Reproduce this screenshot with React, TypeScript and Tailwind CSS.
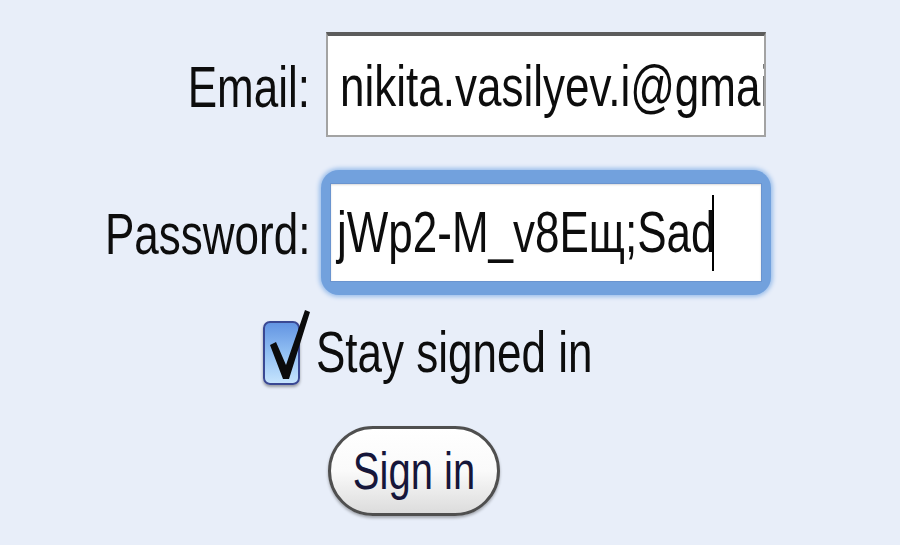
export default function App() {
  return (
    <div className="w-[900px] h-[545px] overflow-hidden bg-[#e8eef9] font-['Liberation_Sans',Arial,sans-serif] text-[44px] leading-none text-[#0d0d0d]">
      {/* Email */}
      <div className="flex items-center pl-[105px] pt-[32px]">
        <label className="w-[205px] text-right pt-[4px]">
          <span className="inline-block scale-y-[1.3]">Email:</span>
        </label>
        <div className="ml-4 w-[440px] h-[105px] flex items-center overflow-hidden whitespace-nowrap bg-white border-x-2 border-b-2 border-t-[4px] border-[#a3a3a3] border-t-[#5c5c5c] pl-[12px]">
          <span className="inline-block scale-y-[1.3]">nikita.vasilyev.i@gmail.com</span>
        </div>
      </div>

      {/* Password */}
      <div className="flex items-center pl-[105px] mt-[33px]">
        <label className="w-[205px] text-right pt-[4px]">
          <span className="inline-block scale-y-[1.3]">Password:</span>
        </label>
        <div className="ml-[11px] w-[450px] h-[125px] rounded-[18px] bg-[#72a1dd] px-[9px] py-[13px] shadow-[0_0_4px_2px_#9cbfeb]">
          <div className="h-full flex items-center overflow-hidden whitespace-nowrap bg-white border border-[#6a94cf] pl-[6px] shadow-[inset_0_1px_2px_rgba(0,0,0,0.15)]">
            <span className="inline-block scale-y-[1.3]">jWp2-M_v8Eщ;Sad</span>
            <span className="inline-block w-[2px] h-[76px] bg-black -ml-[4px]" />
          </div>
        </div>
      </div>

      {/* Stay signed in */}
      <div className="flex items-center pl-[263px] mt-[26px]">
        <div className="relative w-[37px] h-[64px] rounded-[7px] border-2 border-[#3a4893] bg-gradient-to-b from-[#6394e2] via-[#92c0f3] to-[#c6e4fd] shadow-[0_2px_3px_rgba(0,0,0,0.35)]">
          <svg
            className="absolute left-[3px] -top-[14px]"
            width="44"
            height="76"
            viewBox="0 0 44 76"
          >
            <path
              d="M2 36 L8 33 L18 56 L37 1 L42 3 L21 70 L15 70 Z"
              fill="#0b0b0b"
            />
          </svg>
        </div>
        <span className="ml-[16px] inline-block scale-y-[1.3]">Stay signed in</span>
      </div>

      {/* Sign in */}
      <div className="pl-[328px] mt-[41px]">
        <button className="w-[172px] h-[90px] rounded-full border-[3px] border-[#4f4f4f] bg-gradient-to-b from-white via-[#fafafa] to-[#dcdcdc] shadow-[0_2px_3px_rgba(0,0,0,0.3)] text-[40px] text-[#16163a] flex items-center justify-center">
          <span className="inline-block scale-y-[1.3]">Sign in</span>
        </button>
      </div>
    </div>
  );
}
